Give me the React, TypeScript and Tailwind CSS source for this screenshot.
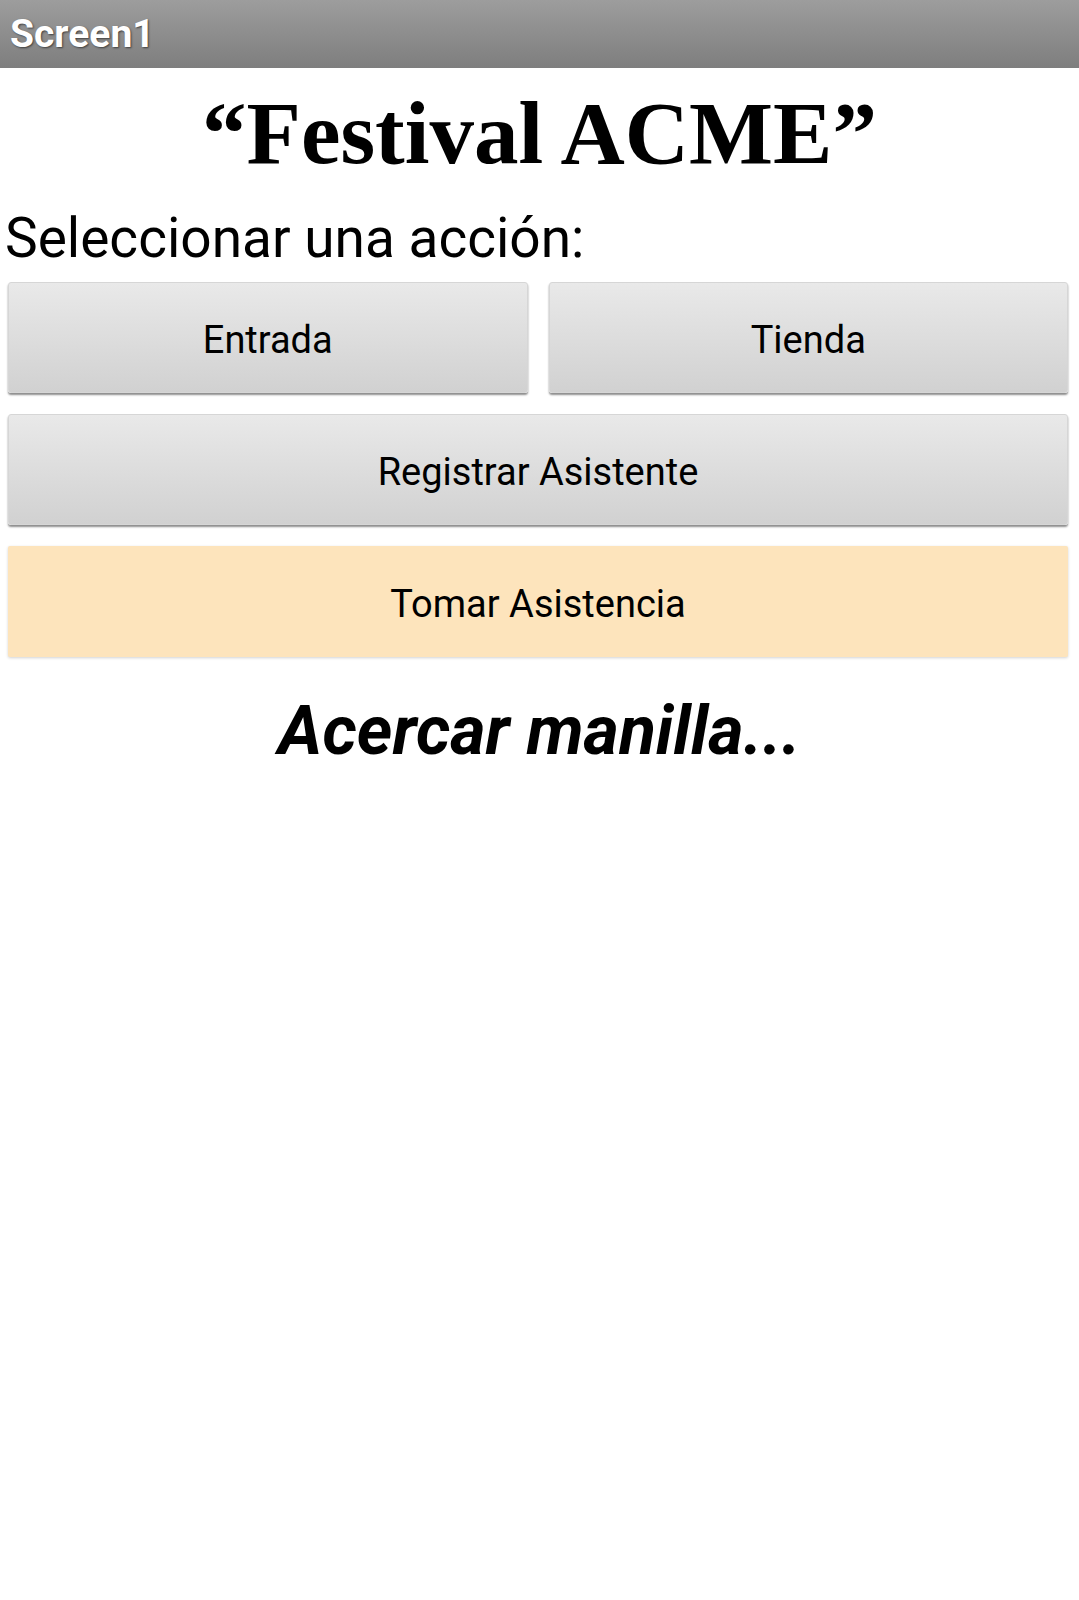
import React from "react";

type ActionButtonProps = {
  label: string;
  active?: boolean;
  className?: string;
};

const ActionButton: React.FC<ActionButtonProps> = ({ label, active, className }) => {
  if (active) {
    return (
      <button
        className={`flex h-[111px] items-center justify-center rounded-[2px] bg-[#fde4bc] pt-[5px] text-[38px] text-black shadow-[0_1px_3px_rgba(0,0,0,0.18)] ${className ?? ""}`}
      >
        {label}
      </button>
    );
  }

  return (
    <button
      className={`flex h-[111px] items-center justify-center rounded-[3px] border border-[#d6d6d6] bg-gradient-to-b from-[#e9e9e9] to-[#d1d1d1] pt-[5px] text-[38px] text-black shadow-[0_2px_2px_rgba(0,0,0,0.45)] ${className ?? ""}`}
    >
      {label}
    </button>
  );
};

const App: React.FC = () => {
  return (
    <div className="min-h-[1600px] w-full bg-white font-['Roboto',sans-serif] text-black">
      <div className="flex h-[68px] items-center bg-gradient-to-b from-[#9d9d9d] to-[#7e7e7e] pl-[10px]">
        <h1 className="text-[39px] font-bold leading-none text-white [text-shadow:1px_1px_2px_rgba(0,0,0,0.55)]">
          Screen1
        </h1>
      </div>

      <h2 className="mt-[21px] text-center font-['Liberation_Serif',serif] text-[89px] font-bold leading-[88px]">
        “Festival ACME”
      </h2>

      <p className="mt-[34px] pl-[5px] text-[55px] leading-[55px]">
        Seleccionar una acción:
      </p>

      <div className="mt-[16px] flex flex-col gap-[21px] pl-[8px] pr-[11px]">
        <div className="grid grid-cols-2 gap-[21px]">
          <ActionButton label="Entrada" />
          <ActionButton label="Tienda" />
        </div>
        <ActionButton label="Registrar Asistente" />
        <ActionButton label="Tomar Asistencia" active />
      </div>

      <p className="mt-[41px] text-center text-[68px] font-bold italic leading-[67px]">
        Acercar manilla...
      </p>
    </div>
  );
};

export default App;
